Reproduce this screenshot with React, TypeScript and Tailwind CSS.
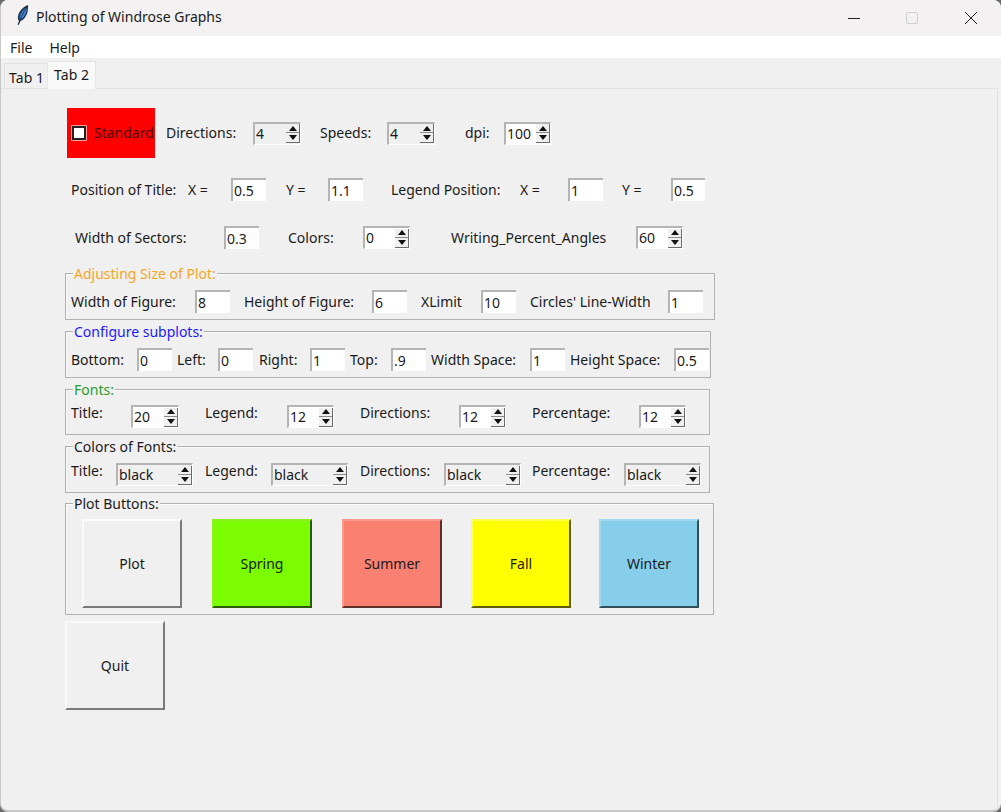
import React from "react";

const FONT = "font-['Noto_Sans',sans-serif] text-[14px] leading-[18px] text-[#1a1a1a]";

function L({ w, children, className = "" }: { w: string; children: React.ReactNode; className?: string }) {
  return <span className={`${w} shrink-0 whitespace-nowrap ${className}`}>{children}</span>;
}

function Entry({ value, w = "w-[35px]", className = "" }: { value: string; w?: string; className?: string }) {
  return (
    <span className={`${w} h-[23px] shrink-0 bg-white border-t-2 border-l-2 border-t-[#b4b4b4] border-l-[#b4b4b4] pl-[1px] flex items-center ${className}`}>
      {value}
    </span>
  );
}

function Arrows() {
  return (
    <span className="w-[14px] h-[19px] shrink-0 flex flex-col border-r border-b border-[#6a6a6a] bg-[#f0f0f0]">
      <span className="h-[9px] flex items-center justify-center border-b border-[#8a8a8a]">
        <svg width="8" height="5" viewBox="0 0 8 5"><path d="M4 0 L8 5 L0 5 Z" fill="#111" /></svg>
      </span>
      <span className="flex-1 flex items-center justify-center">
        <svg width="8" height="5" viewBox="0 0 8 5"><path d="M0 0 L8 0 L4 5 Z" fill="#111" /></svg>
      </span>
    </span>
  );
}

function Spin({ value, w = "w-[47px]", disabled = false, className = "" }: { value: string; w?: string; disabled?: boolean; className?: string }) {
  return (
    <span className={`${w} h-[23px] shrink-0 flex items-center justify-between border-t-2 border-l-2 border-r border-b border-t-[#b4b4b4] border-l-[#b4b4b4] border-r-white border-b-white pl-[1px] ${disabled ? "bg-[#f0f0f0]" : "bg-white"} ${className}`}>
      <span>{value}</span>
      <Arrows />
    </span>
  );
}

function Group({ label, color = "text-[#1a1a1a]", w, h, children }: { label: string; color?: string; w: string; h: string; children: React.ReactNode }) {
  return (
    <section className={`relative ${w} ${h} border border-[#b0b0b0] shadow-[inset_1px_1px_0_#fafafa]`}>
      <span className={`absolute left-[7px] -top-[9px] bg-[#f0f0f0] px-[1px] whitespace-nowrap ${color}`}>{label}</span>
      {children}
    </section>
  );
}

function Btn({ label, bg = "bg-[#f0f0f0]", edge = "border-b-[#7a7a7a] border-r-[#7a7a7a]", top = "border-t-[#fafafa] border-l-[#fafafa]" }: { label: string; bg?: string; edge?: string; top?: string }) {
  return (
    <button className={`w-[100px] h-[89px] shrink-0 ${bg} border-2 ${top} ${edge} text-[#1a1a1a]`}>{label}</button>
  );
}

export default function App() {
  return (
    <div className="w-[1001px] h-[812px] bg-[#6b6b6b]">
      <div className={`${FONT} w-full h-full flex flex-col bg-[#f0f0f0] rounded-t-[8px] rounded-b-[8px] overflow-hidden border-l border-b-2 border-[#c8c8c8]`}>
        {/* Title bar */}
        <header className="h-[36px] shrink-0 bg-[#f3f1f1] flex items-center">
          <svg className="ml-[14px] -mt-[6px]" width="14" height="20" viewBox="0 0 14 20">
            <path d="M13 0 C8 2 4 6 3 11 C2.5 13 3 15 4 16 L2.5 20 L3.5 20 L5.5 16 C9 15 11.5 11 12.5 7 C13 4.5 13.2 2 13 0 Z" fill="#26364f" />
            <path d="M11.8 2.5 C8.5 4.5 5.5 8 4.8 12 C4.6 13 4.7 13.6 5 14.2 C8 13.5 10.3 10.5 11.2 7 C11.6 5.4 11.8 4 11.8 2.5 Z" fill="#3f88dc" />
            <path d="M12 2 C9 6 6.5 11 3.5 19" stroke="#1c2a44" strokeWidth="0.8" fill="none" />
          </svg>
          <span className="ml-[7px] -mt-[2px] whitespace-nowrap">Plotting of Windrose Graphs</span>
          <span className="ml-auto flex items-center">
            <svg width="14" height="14" viewBox="0 0 14 14"><path d="M1 7.5 H13" stroke="#222" strokeWidth="1" /></svg>
            <svg className="ml-[44px]" width="14" height="14" viewBox="0 0 14 14"><rect x="1.5" y="1.5" width="11" height="11" rx="1.5" fill="none" stroke="#cfcfcf" /></svg>
            <svg className="ml-[45px] mr-[23px]" width="14" height="14" viewBox="0 0 14 14"><path d="M1 1 L13 13 M13 1 L1 13" stroke="#222" strokeWidth="1" /></svg>
          </span>
        </header>

        {/* Menu */}
        <nav className="h-[22px] shrink-0 bg-white flex items-center pt-[2px]">
          <span className="ml-[9px]">File</span>
          <span className="ml-[17px]">Help</span>
        </nav>

        {/* Tabs */}
        <div className="h-[31px] shrink-0 flex items-end pl-[3px] border-b border-[#e2e2e2] mr-[3px]">
          <span className="w-[43px] h-[25px] flex items-center justify-center pt-[3px] pl-[1px] bg-[#f0f0f0] border-t border-l border-[#e2e2e2]">Tab 1</span>
          <span className="w-[49px] h-[28px] -mb-[1px] flex items-center justify-center pb-[1px] bg-[#f9f9f9] border-t border-l border-r border-[#e6e6e6]">Tab 2</span>
        </div>

        {/* Pane */}
        <main className="flex-1 pl-[64px] pt-[19px] border-r border-[#e2e2e2] mr-[3px]">
          <div className="ml-[2px] h-[50px] flex items-center">
            <label className="w-[88px] h-[50px] shrink-0 bg-[#ff0000] flex items-center pl-[5px]">
              <span className="w-[14px] h-[14px] bg-white border-2 border-[#222] shadow-[0_0_0_1px_#ff9a9a]" />
              <span className="ml-[8px] text-[#4a0000]">Standard</span>
            </label>
            <L w="w-[87px]" className="ml-[11px]">Directions:</L>
            <Spin value="4" disabled w="w-[48px]" />
            <L w="w-[67px]" className="ml-[19px]">Speeds:</L>
            <Spin value="4" disabled w="w-[48px]" />
            <L w="w-[39px]" className="ml-[30px]">dpi:</L>
            <Spin value="100" />
          </div>

          <div className="ml-[6px] mt-[20px] h-[23px] flex items-center">
            <L w="w-[117px]">Position of Title:</L>
            <L w="w-[43px]">X =</L>
            <Entry value="0.5" />
            <L w="w-[42px]" className="ml-[20px]">Y =</L>
            <Entry value="1.1" />
            <L w="w-[129px]" className="ml-[28px]">Legend Position:</L>
            <L w="w-[48px]">X =</L>
            <Entry value="1" />
            <L w="w-[49px]" className="ml-[19px]">Y =</L>
            <Entry value="0.5" w="w-[34px]" />
          </div>

          <div className="ml-[10px] mt-[25px] h-[23px] flex items-center">
            <L w="w-[149px]">Width of Sectors:</L>
            <Entry value="0.3" />
            <L w="w-[75px]" className="ml-[29px]">Colors:</L>
            <Spin value="0" />
            <L w="w-[185px]" className="ml-[41px]">Writing_Percent_Angles</L>
            <Spin value="60" />
          </div>

          <div className="mt-[24px]">
            <Group label="Adjusting Size of Plot:" color="text-[#f5a623]" w="w-[650px]" h="h-[47px]">
              <div className="absolute left-[5px] top-[16px] h-[23px] flex items-center">
                <L w="w-[124px]">Width of Figure:</L>
                <Entry value="8" />
                <L w="w-[128px]" className="ml-[14px]">Height of Figure:</L>
                <Entry value="6" />
                <L w="w-[60px]" className="ml-[14px]">XLimit</L>
                <Entry value="10" />
                <L w="w-[138px]" className="ml-[14px]">Circles' Line-Width</L>
                <Entry value="1" />
              </div>
            </Group>
          </div>

          <div className="mt-[11px]">
            <Group label="Configure subplots:" color="text-[#1a1aff]" w="w-[646px]" h="h-[47px]">
              <div className="absolute left-[5px] top-[16px] h-[23px] flex items-center">
                <L w="w-[66px]">Bottom:</L>
                <Entry value="0" />
                <L w="w-[36px]" className="ml-[5px]">Left:</L>
                <Entry value="0" className="ml-[5px]" />
                <L w="w-[46px]" className="ml-[6px]">Right:</L>
                <Entry value="1" className="ml-[5px]" />
                <L w="w-[41px]" className="ml-[5px]">Top:</L>
                <Entry value=".9" />
                <L w="w-[99px]" className="ml-[5px]">Width Space:</L>
                <Entry value="1" />
                <L w="w-[104px]" className="ml-[5px]">Height Space:</L>
                <Entry value="0.5" />
              </div>
            </Group>
          </div>

          <div className="mt-[11px]">
            <Group label="Fonts:" color="text-[#2a9d2a]" w="w-[645px]" h="h-[46px]">
              <span className="absolute left-[5px] top-[14px]">Title:</span>
              <div className="absolute left-[65px] top-[15px] h-[23px] flex">
                <Spin value="20" w="w-[48px]" />
                <L w="w-[82px]" className="ml-[26px] -mt-[1px]">Legend:</L>
                <Spin value="12" />
                <L w="w-[99px]" className="ml-[26px] -mt-[1px]">Directions:</L>
                <Spin value="12" />
                <L w="w-[107px]" className="ml-[26px] -mt-[1px]">Percentage:</L>
                <Spin value="12" />
              </div>
            </Group>
          </div>

          <div className="mt-[11px]">
            <Group label="Colors of Fonts:" w="w-[645px]" h="h-[47px]">
              <span className="absolute left-[5px] top-[15px]">Title:</span>
              <div className="absolute left-[50px] top-[16px] h-[23px] flex">
                <Spin value="black" w="w-[77px]" disabled />
                <L w="w-[66px]" className="ml-[12px] -mt-[1px]">Legend:</L>
                <Spin value="black" w="w-[77px]" disabled />
                <L w="w-[84px]" className="ml-[12px] -mt-[1px]">Directions:</L>
                <Spin value="black" w="w-[77px]" disabled />
                <L w="w-[92px]" className="ml-[11px] -mt-[1px]">Percentage:</L>
                <Spin value="black" w="w-[77px]" disabled />
              </div>
            </Group>
          </div>

          <div className="mt-[10px]">
            <Group label="Plot Buttons:" w="w-[649px]" h="h-[112px]">
              <div className="pl-[16px] pt-[15px] flex">
                <Btn label="Plot" />
                <span className="ml-[30px]"><Btn label="Spring" bg="bg-[#7cfc00]" edge="border-b-[#2c5a00] border-r-[#2c5a00]" top="border-t-[#8cf020] border-l-[#8cf020]" /></span>
                <span className="ml-[30px]"><Btn label="Summer" bg="bg-[#fa8072]" edge="border-b-[#5d3029] border-r-[#5d3029]" top="border-t-[#fc9a8e] border-l-[#fc9a8e]" /></span>
                <span className="ml-[29px]"><Btn label="Fall" bg="bg-[#ffff00]" edge="border-b-[#5f5f00] border-r-[#5f5f00]" top="border-t-[#ffff50] border-l-[#ffff50]" /></span>
                <span className="ml-[28px]"><Btn label="Winter" bg="bg-[#87ceeb]" edge="border-b-[#325058] border-r-[#325058]" top="border-t-[#a0d8ef] border-l-[#a0d8ef]" /></span>
              </div>
            </Group>
          </div>

          <div className="mt-[6px]">
            <Btn label="Quit" />
          </div>
        </main>
      </div>
    </div>
  );
}
